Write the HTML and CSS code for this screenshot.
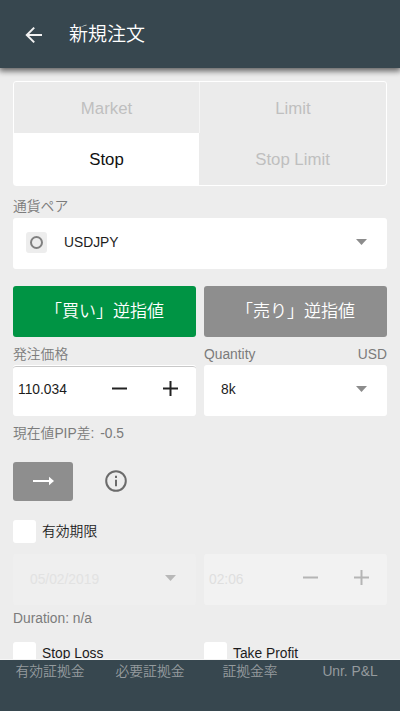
FILE: index.html
```html
<!DOCTYPE html>
<html lang="ja">
<head>
<meta charset="utf-8">
<title>新規注文</title>
<link rel="stylesheet" href="styles.css">
</head>
<body>
<div class="app">
  <header class="bar">
    <svg class="back" viewBox="0 0 18 18"><path d="M17 9H2M9.200 1.600L1.800 9l7.400 7.400"/></svg>
    <h1 class="title">新規注文</h1>
  </header>
  <main class="form">
    <div class="tabs">
      <div class="tab">Market</div>
      <div class="tab edge">Limit</div>
      <div class="tab active">Stop</div>
      <div class="tab">Stop Limit</div>
    </div>
    <div class="label pair-label">通貨ペア</div>
    <div class="box pair">
      <span class="badge"><span class="ring"></span></span>
      <span class="value">USDJPY</span>
      <svg class="caret" viewBox="0 0 11 6"><path d="M0 0h11L5.500 6z"/></svg>
    </div>
    <div class="row sides">
      <div class="side buy">「買い」逆指値</div>
      <div class="side sell">「売り」逆指値</div>
    </div>
    <div class="row labels">
      <div class="label">発注価格</div>
      <div class="label split"><span>Quantity</span><span>USD</span></div>
    </div>
    <div class="row">
      <div class="box stepper price">
        <span class="value">110.034</span>
        <svg class="sign" viewBox="0 0 15 15"><path d="M0 7.500h15"/></svg>
        <svg class="sign" viewBox="0 0 15 15"><path d="M0 7.500h15M7.500 0v15"/></svg>
      </div>
      <div class="box select">
        <span class="value">8k</span>
        <svg class="caret" viewBox="0 0 11 6"><path d="M0 0h11L5.500 6z"/></svg>
      </div>
    </div>
    <div class="label pip"><span>現在値PIP差:</span><span>-0.5</span></div>
    <div class="tools">
      <div class="go"><svg class="arrow" viewBox="0 0 21 10"><path class="shaft" d="M0 5h17"/><path class="head" d="M16 .8L21 5l-5 4.200z"/></svg></div>
      <svg class="info" viewBox="0 0 22 22"><circle cx="11" cy="11" r="9.800"/><path d="M11 9.800v6.400M11 5.800v2.200"/></svg>
    </div>
    <div class="check expiry"><span class="tick"></span>有効期限</div>
    <div class="row">
      <div class="box select off">
        <span class="value">05/02/2019</span>
        <svg class="caret" viewBox="0 0 11 6"><path d="M0 0h11L5.500 6z"/></svg>
      </div>
      <div class="box stepper off time">
        <span class="value">02:06</span>
        <svg class="sign" viewBox="0 0 15 15"><path d="M0 7.500h15"/></svg>
        <svg class="sign" viewBox="0 0 15 15"><path d="M0 7.500h15M7.500 0v15"/></svg>
      </div>
    </div>
    <div class="label duration">Duration: n/a</div>
    <div class="row exits">
      <div class="check"><span class="tick"></span><span class="name">Stop Loss</span></div>
      <div class="check"><span class="tick"></span><span class="name">Take Profit</span></div>
    </div>
  </main>
  <footer class="summary">
    <span>有効証拠金</span><span>必要証拠金</span><span>証拠金率</span><span>Unr. P&amp;L</span>
  </footer>
</div>
</body>
</html>
```
FILE: styles.css
```css
* { box-sizing: border-box; }
body {
  margin: 0;
  font-family: "Liberation Sans", "Noto Sans CJK JP", sans-serif;
  font-size: 13.8px;
  font-weight: 350;
  color: #1c1c1c;
  background: #ededed;
}
.app { display: flex; flex-direction: column; width: 400px; height: 711px; overflow: hidden; }
.bar {
  position: relative;
  z-index: 1;
  flex: none;
  display: flex;
  align-items: center;
  height: 68px;
  padding-left: 25px;
  background: #37474f;
  box-shadow: 0 2px 6px 1px rgba(0, 0, 0, .6);
}
.back { width: 18px; height: 18px; margin-top: 1px; fill: none; stroke: #f2f2f2; stroke-width: 2; }
.title { margin: 1px 0 0 26px; font-size: 19px; line-height: 28px; font-weight: 350; color: #fff; }
.form { flex: 1; min-height: 0; overflow: hidden; padding: 13px 13px 0; }
.tabs {
  display: grid;
  grid-template-columns: 185px 1fr;
  grid-template-rows: 51px 52px;
  height: 105px;
  border: 1px solid #fff;
  border-radius: 3px;
  background: #ebebeb;
}
.tab { display: flex; align-items: center; justify-content: center; padding-top: 2px; font-size: 16.8px; color: #bfbfbf; }
.edge { border-left: 1px solid #f5f5f5; }
.tab.active { background: #fff; color: #111; }
.label { height: 20px; line-height: 20px; color: #7b7b7b; white-space: nowrap; }
.pair-label { margin: 11px 0 1px; }
.box {
  display: flex;
  align-items: center;
  height: 51px;
  border-radius: 3px;
  background: #fff;
}
.value { flex: 1; margin-top: -2px; }
.caret { width: 11px; height: 6px; fill: #8c8c8c; margin: -3px 20px 0 0; }
.badge {
  display: flex;
  align-items: center;
  justify-content: center;
  width: 21px;
  height: 21px;
  margin: -2px 17px 0 13px;
  border-radius: 3px;
  background: #ededed;
}
.ring { width: 13px; height: 13px; border: 2px solid #808080; border-radius: 50%; }
.row { display: grid; grid-template-columns: 183px 183px; gap: 8px; }
.sides { margin-top: 17px; }
.side {
  display: flex;
  align-items: center;
  justify-content: center;
  height: 51px;
  padding-bottom: 4px;
  border-radius: 3px;
  font-size: 17px;
  color: #fff;
}
.buy { background: #009444; }
.sell { background: #8e8e8e; }
.labels { margin: 8px 0 0; }
.split { display: flex; justify-content: space-between; }
.stepper { padding: 0 18px 0 5px; }
.price { border-top: 1px solid #fff; box-shadow: inset 0 1px #c8c8c8; }
.price .value { margin-top: -3px; }
.sign { width: 15px; height: 15px; margin: -4px 0 0 36px; stroke: #222; stroke-width: 2; fill: none; }
.price .sign { margin-top: -6px; }
.select { padding-left: 17px; }
.off .value { margin-top: -1px; }
.pip { display: flex; gap: 6px; margin-top: 8px; }
.tools { display: flex; align-items: center; height: 39px; margin-top: 18px; gap: 32px; }
.go {
  display: flex;
  align-items: center;
  justify-content: center;
  width: 60px;
  height: 39px;
  border-radius: 3px;
  background: #8e8e8e;
}
.arrow { width: 21px; height: 10px; margin-top: -1px; }
.shaft { stroke: #fff; stroke-width: 2; }
.head { fill: #fff; }
.info { width: 22px; height: 22px; margin-top: -1px; fill: none; stroke: #6b6b6b; stroke-width: 2; }
.check { display: flex; align-items: center; gap: 6px; height: 23px; }
.tick { width: 23px; height: 23px; border-radius: 3px; background: #fff; }
.name { margin-top: -1px; }
.expiry { margin: 19px 0 11px; line-height: 19px; }
.off { background: #f2f2f2; color: #dfdfdf; }
.off:first-child { background: #efefef; color: #e2e2e2; }
.off .caret { fill: #b8b8b8; }
.off .sign { stroke: #b5b5b5; }
.duration { margin-top: 4px; }
.exits { margin-top: 13px; }
.summary {
  flex: none;
  display: grid;
  grid-template-columns: repeat(4, 100px);
  height: 52px;
  padding-top: 2px;
  border-top: 1px solid #f5f5f5;
  line-height: 20px;
  text-align: center;
  color: #959b9e;
  background: #37474f;
}
```
